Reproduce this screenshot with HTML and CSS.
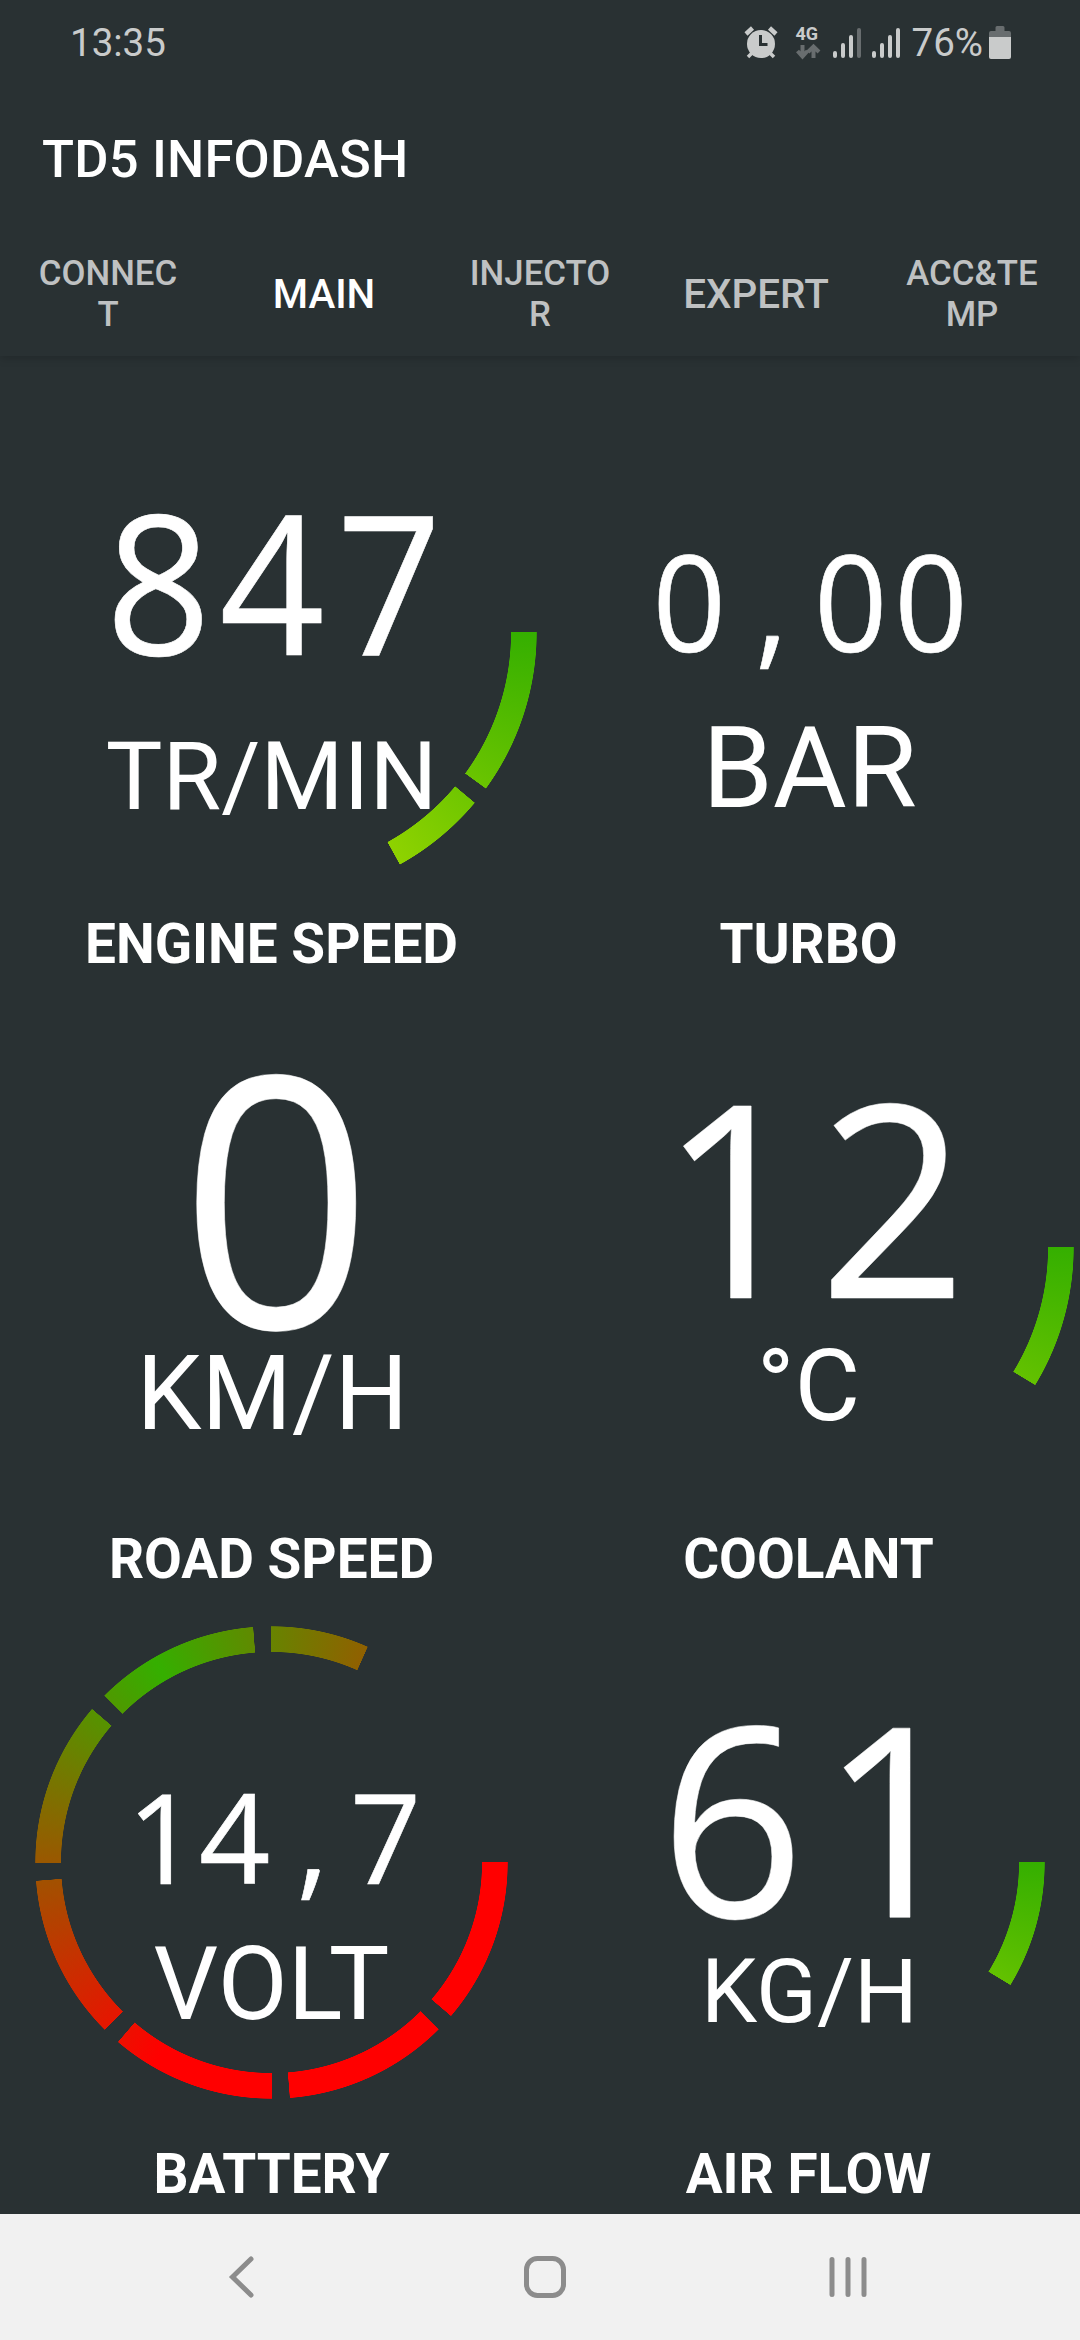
FILE: index.html
```html
<!DOCTYPE html>
<html lang="en">
<head>
    <meta charset="utf-8">
    <title>TD5 INFODASH</title>
    <link rel="stylesheet" href="styles.css">
</head>
<body>
    <header class="appbar">
        <div class="status">
            <span class="clock">13:35</span>
            <div class="status-icons">
                <svg class="alarm" width="34" height="34" viewBox="0 0 34 34">
                    <path d="M2 8 L8.5 2 M32 8 L25.500 2" stroke-width="4.500"/>
                    <path d="M8 27 L4 31 M26 27 L30 31" stroke-width="3.500"/>
                    <circle cx="17" cy="18" r="14" stroke="none" fill="#c9cbcb"/>
                    <path d="M16.500 9 V18.500 H23.500" stroke="#293133" stroke-width="3"/>
                </svg>
                <svg class="net" width="26" height="36" viewBox="0 0 26 36">
                    <text x="0.500" y="15">4G</text>
                    <path d="M7.500 20 V30 M2.500 26 L7.500 31.500 L12.500 26 M18.500 33 V22 M13 27 L18.500 21.500 L24 27"/>
                </svg>
                <svg class="bars" width="28" height="32" viewBox="0 0 28 32">
                    <path d="M2 26 V29 M10 18 V29 M18 10 V29"/>
                    <path class="off" d="M26 3 V29"/>
                </svg>
                <svg class="bars" width="28" height="32" viewBox="0 0 28 32">
                    <path d="M2 26 V29 M10 18 V29 M18 10 V29 M26 3 V29"/>
                </svg>
                <span class="percent">76%</span>
                <svg width="22" height="34" viewBox="0 0 22 34">
                    <path d="M6.500 1.500 Q6.500 0 8 0 H14 Q15.500 0 15.500 1.500 V5 H20 Q22 5 22 7 V12 H0 V7 Q0 5 2 5 H6.500 Z" fill="#686d6f"/>
                    <path d="M0 11 H22 V31 Q22 33 20 33 H2 Q0 33 0 31 Z" fill="#c9cbcb"/>
                </svg>
            </div>
        </div>
        <h1>TD5 INFODASH</h1>
        <nav class="tabs">
            <a class="small">CONNEC<br>T</a>
            <a class="active">MAIN</a>
            <a class="small">INJECTO<br>R</a>
            <a>EXPERT</a>
            <a class="small">ACC&amp;TE<br>MP</a>
        </nav>
    </header>

    <main class="dash">
        <section class="cell">
            <div class="gauge">
                <svg viewBox="-268.5 -265.5 537 531">
                    <text class="value" transform="scale(0.95 1)" x="-119 0.500 124" y="22.800" font-size="194">847</text>
                    <text class="unit" x="0" y="176.500" font-size="95.200">TR/MIN</text>
                </svg>
                <div class="ring large engine"></div>
            </div>
            <h2>ENGINE SPEED</h2>
        </section>
        <section class="cell">
            <div class="gauge">
                <svg viewBox="-268.5 -265.5 537 531">
                    <text class="value" transform="scale(0.96 1)" x="-124.200 -38.500 44 127.600" y="19.500" font-size="134">0,00</text>
                    <text class="unit" x="1" y="174.200" font-size="113.500">BAR</text>
                </svg>
            </div>
            <h2>TURBO</h2>
        </section>
        <section class="cell">
            <div class="gauge">
                <svg viewBox="-268.5 -265.5 537 531">
                    <text class="value" transform="scale(0.965 1)" x="5" y="80.500" font-size="350">0</text>
                    <text class="unit" x="1" y="181" font-size="103.500">KM/H</text>
                </svg>
            </div>
            <h2>ROAD SPEED</h2>
        </section>
        <section class="cell">
            <div class="gauge">
                <svg viewBox="-268.5 -265.5 537 531">
                    <text class="value" transform="scale(0.965 1)" x="-77 87.500" y="50.500" font-size="269">12</text>
                    <text class="unit" x="0" y="172.800" font-size="101">°C</text>
                </svg>
                <div class="ring large coolant"></div>
            </div>
            <h2>COOLANT</h2>
        </section>
        <section class="cell">
            <div class="gauge">
                <svg viewBox="-268.5 -265.5 537 531">
                    <text class="value" x="-109 -37 41 114" y="21" font-size="124.600">14,7</text>
                    <text class="unit" x="0" y="156.500" font-size="101.700">VOLT</text>
                </svg>
                <div class="ring battery"></div>
            </div>
            <h2>BATTERY</h2>
        </section>
        <section class="cell">
            <div class="gauge">
                <svg viewBox="-268.5 -265.5 537 531">
                    <text class="value" transform="scale(0.955 1)" x="-80 89" y="54.800" font-size="265">61</text>
                    <text class="unit" x="1" y="159" font-size="89.600">KG/H</text>
                </svg>
                <div class="ring airflow"></div>
            </div>
            <h2>AIR FLOW</h2>
        </section>
    </main>

    <footer class="navbar">
        <svg width="42" height="42" viewBox="0 0 42 42"><path d="M30 3 L11.500 21 L30 39"/></svg>
        <svg width="42" height="42" viewBox="0 0 42 42"><rect x="2.500" y="2.500" width="37" height="37" rx="11"/></svg>
        <svg width="42" height="42" viewBox="0 0 42 42"><path d="M5 3.500 V38.500 M21 3.500 V38.500 M37 3.500 V38.500"/></svg>
    </footer>
</body>
</html>
```
FILE: styles.css
```css
* {
    box-sizing: border-box;
}

body {
    margin: 0;
    width: 1080px;
    height: 2340px;
    display: flex;
    flex-direction: column;
    background-color: #293133;
    color: #fff;
    font-family: Roboto, sans-serif;
}

h1, h2 {
    margin: 0;
}

/* top bar */
.appbar {
    height: 356px;
    box-shadow: 0 2px 9px rgba(0, 0, 0, 0.18);
}

.status {
    height: 85px;
    padding: 0 69px 0 70px;
    display: flex;
    justify-content: space-between;
    align-items: center;
    color: #c9cbcb;
    font-size: 38.5px;
}

.status-icons {
    display: flex;
    align-items: center;
}

.status-icons svg {
    fill: none;
    stroke-linecap: butt;
    overflow: visible;
}

.alarm {
    stroke: #c9cbcb;
    margin-right: 17px;
}

.net {
    margin-right: 12px;
    stroke: #686d6f;
    stroke-width: 4;
}

.net text {
    fill: #c9cbcb;
    stroke: none;
    font-size: 18px;
    font-weight: bold;
}

.status-icons .bars {
    stroke: #c9cbcb;
    stroke-width: 4;
    stroke-linecap: round;
    margin-right: 11px;
}

.bars .off {
    stroke: #686d6f;
}

.percent {
    margin: 0 6px 0 1px;
}

h1 {
    height: 147px;
    padding-left: 42px;
    line-height: 148px;
    font-size: 52.5px;
    font-weight: 500;
    letter-spacing: 0.2px;
}

.tabs {
    height: 124px;
    display: grid;
    grid-template-columns: repeat(5, 216px);
    align-items: center;
    text-align: center;
    font-size: 40.4px;
    font-weight: 500;
    color: #bfc1c2;
}

.tabs .small {
    font-size: 34.8px;
    line-height: 41px;
}

.tabs .active {
    color: #fff;
}

/* gauges */
.dash {
    flex: 1;
    padding: 11px 3px 0;
    display: grid;
    grid-template-columns: 537px 537px;
    grid-template-rows: repeat(3, 615px);
}

.gauge {
    height: 531px;
    display: grid;
    place-items: center;
}

.gauge > * {
    grid-area: 1 / 1;
}

.gauge svg {
    width: 537px;
    height: 531px;
    overflow: visible;
    fill: #fff;
    text-anchor: middle;
}

.value {
    font-family: "Open Sans", sans-serif;
    stroke: #fff;
    stroke-width: 0.6;
}

.unit {
    font-family: Roboto, sans-serif;
}

.cell h2 {
    height: 84px;
    line-height: 92px;
    text-align: center;
    font-size: 54.9px;
    font-weight: bold;
}

.ring {
    --arc: conic-gradient(from 90deg, #000 31.2deg, transparent 31.3deg 359.8deg, #000 359.8deg);
    width: 473px;
    height: 473px;
    background: conic-gradient(from 90deg, #35af00, #ffff00 138deg, #ff0000 270deg, #ff0000);
    mask: var(--arc), radial-gradient(closest-side, transparent calc(100% - 26.3px), #000 calc(100% - 25.7px) calc(100% - 0.6px), transparent);
    mask-composite: intersect;
}

.large {
    width: 531px;
    height: 531px;
}

.engine {
    --arc: conic-gradient(from 90deg, #000 36deg, transparent 36.1deg 39.9deg, #000 40deg 61deg, transparent 61.1deg 359.8deg, #000 359.8deg);
}

.battery {
    --arc: conic-gradient(from 90deg,
        #000 40.5deg, transparent 40.6deg 44.9deg,
        #000 45deg 85.5deg, transparent 85.6deg 89.9deg,
        #000 90deg 130.5deg, transparent 130.6deg 134.9deg,
        #000 135deg 175.5deg, transparent 175.6deg 179.9deg,
        #000 180deg 220.5deg, transparent 220.6deg 224.9deg,
        #000 225deg 265.5deg, transparent 265.6deg 269.9deg,
        #000 270deg 294deg, transparent 294.1deg);
    background: conic-gradient(from 90deg, #ff0000 120deg, #35af00 240deg, #ff0000);
}

/* system navigation */
.navbar {
    height: 126px;
    padding-left: 221px;
    display: flex;
    align-items: center;
    gap: 261px;
    background-color: #f1f1f1;
}

.navbar svg {
    fill: none;
    stroke: #8c8c8c;
    stroke-width: 5;
    stroke-linecap: round;
}
```
